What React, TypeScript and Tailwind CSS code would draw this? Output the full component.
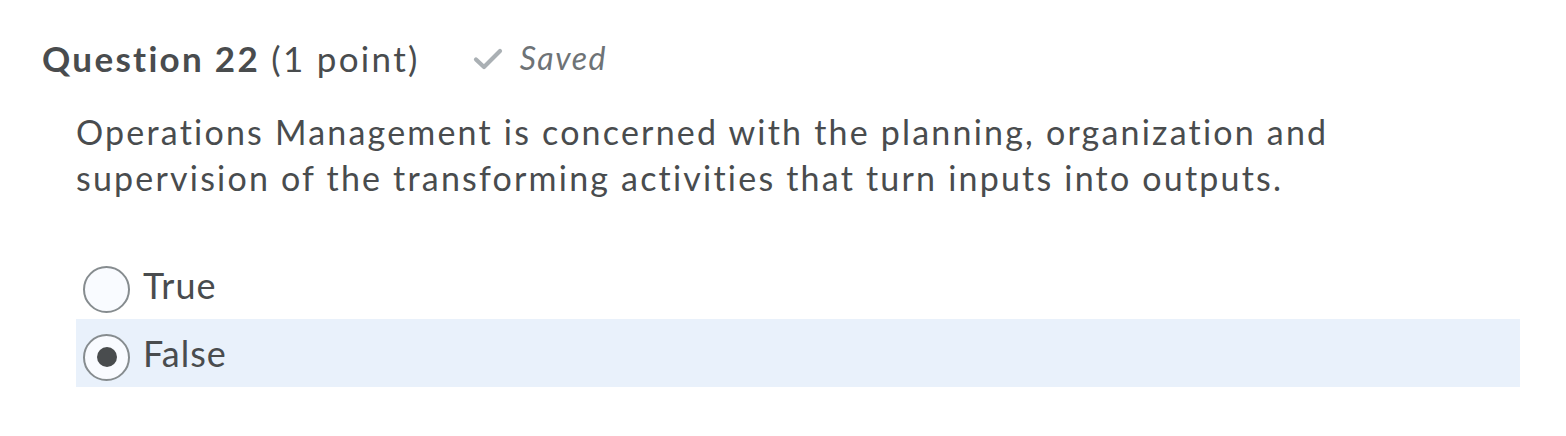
import React from "react";

function Radio({ checked }: { checked: boolean }) {
  return (
    <span className="mt-[8px] flex h-[47px] w-[47px] shrink-0 items-center justify-center rounded-full border-2 border-[#868c8f] bg-[#f9fbff]">
      {checked && <span className="h-[20px] w-[20px] rounded-full bg-[#494c4e]" />}
    </span>
  );
}

export default function App() {
  return (
    <div className="h-[436px] w-[1566px] bg-white text-[#494c4e]" style={{ fontFamily: "Lato, 'Open Sans', sans-serif" }}>
      <div className="flex h-[80px] items-start pl-[42px] pt-[36px]">
        <h2 className="text-[35px] leading-[44px] tracking-[2.3px]">
          <span className="font-bold">Question 22</span>
          <span className="font-normal"> (1 point)</span>
        </h2>
        <span className="ml-[53px] flex h-[44px] items-center gap-[17px]">
          <svg width="30" height="24" viewBox="0 0 30 24" fill="none" className="mt-[2px]">
            <path d="M3 12.5 L11 20 L27 4" stroke="#aab0b4" strokeWidth="4.2" strokeLinecap="round" strokeLinejoin="round" />
          </svg>
          <span className="text-[32px] italic leading-[44px] tracking-[1.5px] text-[#6e7376]">Saved</span>
        </span>
      </div>
      <p className="mt-[29px] pl-[76px] text-[34px] leading-[46px] tracking-[2.2px]">
        Operations Management is concerned with the planning, organization and
        <br />
        supervision of the transforming activities that turn inputs into outputs.
      </p>
      <div className="ml-[76px] mt-[50px] w-[1444px]">
        <div className="flex h-[68px] items-center gap-[13px] pl-[7px]">
          <Radio checked={false} />
          <span className="text-[36px] leading-[42px] tracking-[1px]">True</span>
        </div>
        <div className="flex h-[68px] items-center gap-[13px] bg-[#e9f1fb] pl-[7px]">
          <Radio checked />
          <span className="text-[36px] leading-[42px] tracking-[1px]">False</span>
        </div>
      </div>
    </div>
  );
}
